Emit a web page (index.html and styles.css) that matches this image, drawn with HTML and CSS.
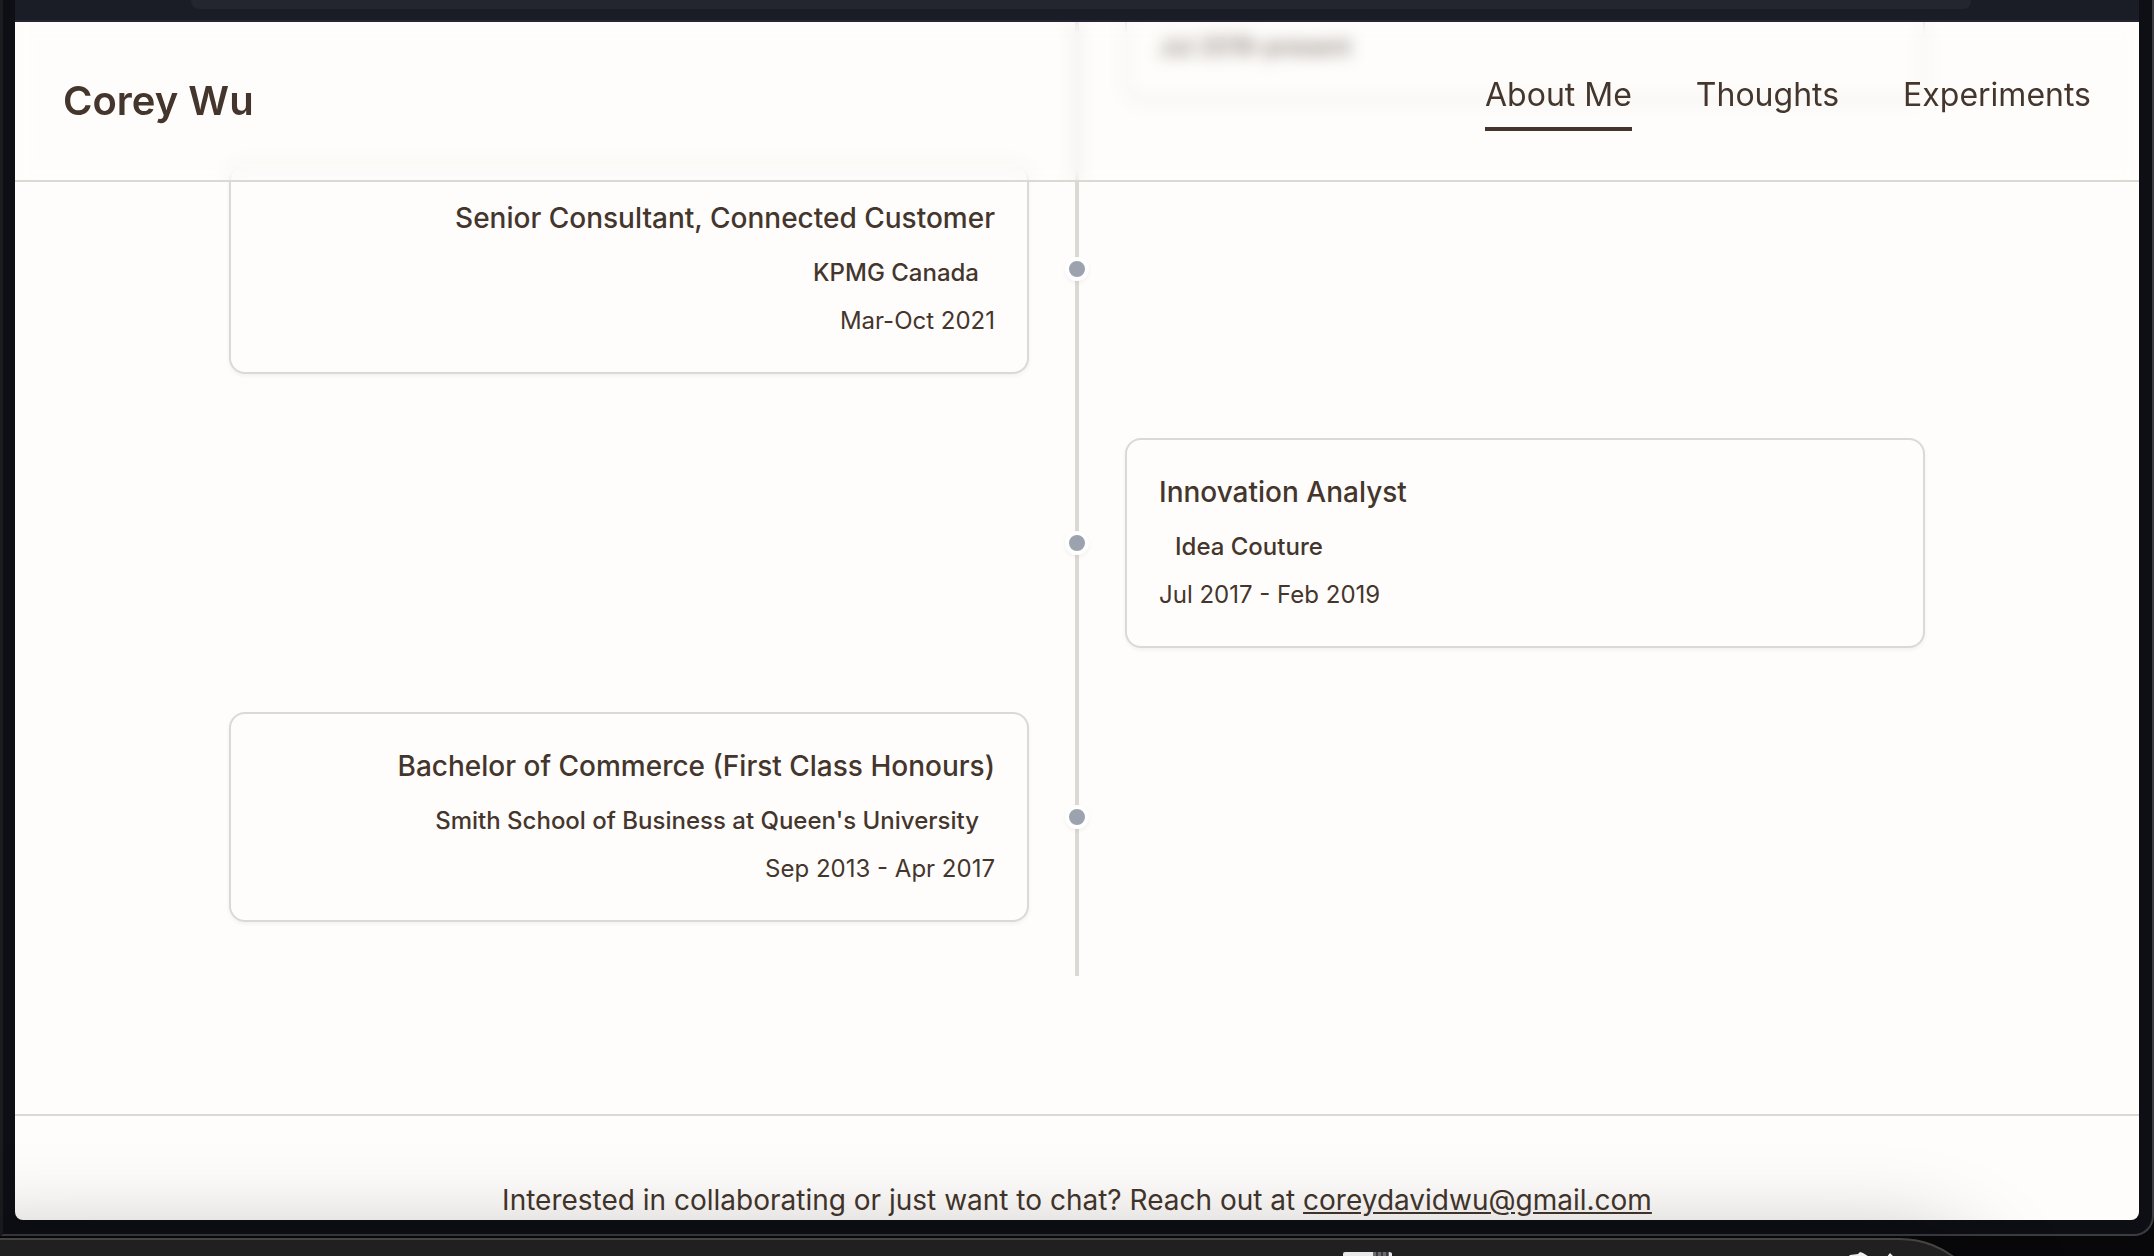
FILE: index.html
```html
<!DOCTYPE html>
<html lang="en">
<head>
<meta charset="utf-8">
<title>Corey Wu</title>
<link rel="stylesheet" href="styles.css">
</head>
<body>
<div class="window">
  <div class="toolbar"><div class="address"></div></div>
  <div class="viewport">
    <header class="header">
      <a class="brand" href="#">Corey Wu</a>
      <nav class="nav">
        <a class="nav-link active" href="#about">About Me</a>
        <a class="nav-link" href="#thoughts">Thoughts</a>
        <a class="nav-link" href="#experiments">Experiments</a>
      </nav>
    </header>
    <main class="timeline">
      <article class="entry right">
        <div class="card">
          <p class="date">Jul 2019-present</p>
        </div>
        <span class="dot"></span>
      </article>
      <article class="entry left">
        <div class="card">
          <h3 class="role">Senior Consultant, Connected Customer</h3>
          <p class="org">KPMG Canada</p>
          <p class="date">Mar-Oct 2021</p>
        </div>
        <span class="dot"></span>
      </article>
      <article class="entry right">
        <div class="card">
          <h3 class="role">Innovation Analyst</h3>
          <p class="org">Idea Couture</p>
          <p class="date">Jul 2017 - Feb 2019</p>
        </div>
        <span class="dot"></span>
      </article>
      <article class="entry left">
        <div class="card">
          <h3 class="role">Bachelor of Commerce (First Class Honours)</h3>
          <p class="org">Smith School of Business at Queen's University</p>
          <p class="date">Sep 2013 - Apr 2017</p>
        </div>
        <span class="dot"></span>
      </article>
    </main>
    <footer class="footer">
      <p class="contact">Interested in collaborating or just want to chat? Reach out at <a class="mail" href="mailto:coreydavidwu@gmail.com">coreydavidwu@gmail.com</a></p>
    </footer>
  </div>
</div>
<div class="dock">
  <svg class="dock-icon" width="50" height="4" viewBox="0 0 50 4"><path d="M0 4V2q0-2 2-2H46q3 0 3 2v2z" fill="#e9e9ec"/><path d="M30 0h16v4H30z" fill="#6b6c72"/><path d="M33 0h2v4h-2zM38 0h2v4h-2zM43 0h2v4h-2z" fill="#3b3c42"/></svg>
  <svg class="dock-icon" width="50" height="6" viewBox="0 0 50 6"><path d="M0 6l3-3 8-1 2-2 3 1 8 5zM39 6l4-5 5 5z" fill="#eee"/></svg>
</div>
</body>
</html>
```
FILE: styles.css
```css
* { box-sizing: border-box; }

body {
  margin: 0;
  height: 100vh;
  overflow: hidden;
  display: grid;
  grid-template-rows: minmax(0, 1fr) 18px;
  gap: 2px;
  background: #08080a;
  color: #44362c;
  font-family: Inter, "Liberation Sans", sans-serif;
}

/* browser window */
.window {
  display: flex;
  flex-direction: column;
  padding: 0 13px 14px 12px;
  border: solid #3c3d42;
  border-width: 0 2px 2px 0;
  border-left: 3px solid #1b1c20;
  border-radius: 0 0 20px 0;
  background: #0e0f15;
}

.toolbar {
  flex: none;
  height: 22px;
  padding: 0 168px 0 176px;
  background: #1a1d25;
  border-bottom: 2px solid #232532;
}

.address {
  height: 9px;
  border-radius: 0 0 8px 8px;
  background: #23262f;
}

.viewport {
  flex: 1;
  min-height: 0;
  overflow: hidden;
  border-radius: 0 0 8px 8px;
  background: #fffdfc;
}

/* site header */
.header {
  position: sticky;
  top: 0;
  z-index: 2;
  display: flex;
  align-items: center;
  justify-content: space-between;
  height: 160px;
  padding: 0 48px;
  border-bottom: 2px solid #dad9d4;
  background: rgba(255, 253, 252, 0.2);
  backdrop-filter: blur(8px);
}

.brand {
  color: inherit;
  font-size: 40px;
  font-weight: 600;
  line-height: 56px;
  text-decoration: none;
}

.nav { display: flex; gap: 64px; }

.nav-link {
  padding: 0 0 8px;
  border-bottom: 4px solid transparent;
  color: inherit;
  font-size: 32px;
  line-height: 48px;
  text-decoration: none;
}

.nav-link.active { border-color: #44362c; }

/* timeline, scrolled part of the way under the header */
.timeline {
  position: relative;
  display: flex;
  flex-direction: column;
  gap: 64px;
  max-width: 1696px;
  margin: -292px auto 138px;
  padding-bottom: 54px;
}

.timeline::before {
  content: "";
  position: absolute;
  top: 0;
  bottom: 0;
  left: calc(50% - 2px);
  width: 4px;
  background: #dad9d4;
}

.entry {
  position: relative;
  display: grid;
  grid-template-columns: 1fr 1fr;
  column-gap: 96px;
}

.card {
  display: flex;
  flex-direction: column;
  justify-content: flex-end;
  min-height: 210px;
  padding: 32px 32px 30px;
  border: 2px solid #dad9d4;
  border-radius: 16px;
  background: #fffdfc;
  box-shadow: 0 2px 4px rgba(0, 0, 0, 0.05);
}

.left .card { text-align: right; }
.right .card { grid-column: 2; }

.role {
  margin: 0 0 16px;
  font-size: 28px;
  font-weight: 500;
  line-height: 40px;
}

.org {
  margin: 0 0 8px;
  padding: 0 16px;
  font-size: 24px;
  font-weight: 500;
  line-height: 38px;
}

.date {
  margin: 0;
  font-size: 24px;
  line-height: 42px;
}

.dot {
  position: absolute;
  top: calc(50% - 12px);
  left: calc(50% - 12px);
  width: 24px;
  height: 24px;
  border: 4px solid #fff;
  border-radius: 50%;
  background: #9ca3af;
  box-shadow: 0 2px 4px rgba(0, 0, 0, 0.05);
}

/* footer */
.footer {
  padding: 64px 48px;
  border-top: 2px solid #dad9d4;
  text-align: center;
}

.contact {
  margin: 0;
  font-size: 28px;
  line-height: 40px;
}

.mail { color: inherit; }

/* system dock peeking in below the window */
.dock {
  position: relative;
  height: 180px;
  margin: 0 164px 0 -100px;
  padding-left: 1441px;
  border: 2px solid #444542;
  border-radius: 90px;
  background: #202021;
  box-shadow: 0 0 90px rgba(0, 0, 0, 0.26);
  display: flex;
  gap: 454px;
}

.dock-icon { flex: none; margin-top: 12px; }
```
